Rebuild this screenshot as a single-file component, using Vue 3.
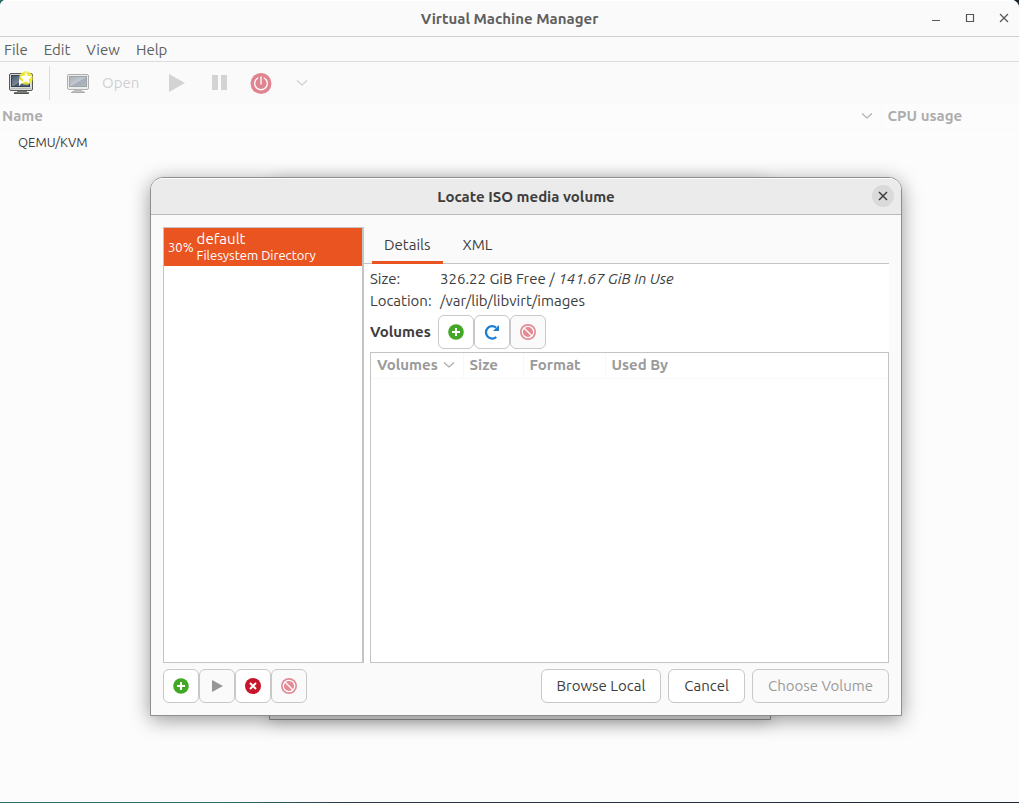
<script setup>
import { ref } from 'vue'

const menus = ['File', 'Edit', 'View', 'Help']
const tabs = ['Details', 'XML']
const activeTab = ref('Details')
</script>

<template>
  <div class="desktop">
    <main class="window">
      <header class="titlebar">
        <h1>Virtual Machine Manager</h1>
        <div class="controls">
          <button type="button" aria-label="Minimize">
            <svg width="10" height="10" viewBox="0 0 10 10"><path d="M1 7.5h8" /></svg>
          </button>
          <button type="button" aria-label="Maximize">
            <svg width="10" height="10" viewBox="0 0 10 10"><path d="M1.5 1.5h7v7h-7z" /></svg>
          </button>
          <button type="button" aria-label="Close">
            <svg width="10" height="10" viewBox="0 0 10 10"><path d="M1 1l8 8M9 1l-8 8" /></svg>
          </button>
        </div>
      </header>

      <nav class="menubar">
        <button v-for="m in menus" :key="m" type="button">{{ m }}</button>
      </nav>

      <div class="toolbar">
        <button type="button" class="new-vm" aria-label="Create a new virtual machine">
          <svg width="26" height="24" viewBox="0 0 26 24">
            <defs>
              <linearGradient id="screenDark" x1="0" y1="0" x2="1" y2="1">
                <stop offset="0" stop-color="#45546a" />
                <stop offset="0.5" stop-color="#7a8797" />
                <stop offset="0.55" stop-color="#47566c" />
                <stop offset="1" stop-color="#5b6b82" />
              </linearGradient>
              <radialGradient id="glow">
                <stop offset="0.5" stop-color="#f3ee2a" />
                <stop offset="0.8" stop-color="#f1ec35" stop-opacity="0.85" />
                <stop offset="1" stop-color="#f1ec35" stop-opacity="0" />
              </radialGradient>
            </defs>
            <path d="M9 20h10v1h2v2H6v-2h3z" fill="#777974" />
            <path d="M6 22.5h14" stroke="#50534e" />
            <rect x="1.5" y="2.5" width="23" height="17" rx="1.5" fill="#d9dad7" stroke="#555753" />
            <rect x="3.5" y="4.5" width="18" height="11" fill="url(#screenDark)" stroke="#38414e" />
            <path d="M3 17.5h20" stroke="#b8bab6" />
            <circle cx="18" cy="7" r="7.5" fill="url(#glow)" />
            <path d="M18 1l1.600 3.900 4.400.4-3.300 2.900 1 4.300L18 10.200l-3.900 2.300 1.100-4.300-3.200-2.900 4.400-.4z" fill="#fff" />
            <path d="M11 8l4 3-4 4z" fill="#fff" />
          </svg>
        </button>
        <span class="divider"></span>
        <button type="button" class="open" disabled>
          <svg width="24" height="22" viewBox="0 0 24 22">
            <defs>
              <linearGradient id="screenPale" x1="0" y1="0" x2="1" y2="1">
                <stop offset="0" stop-color="#a9b0b9" />
                <stop offset="0.5" stop-color="#c2c8cf" />
                <stop offset="0.55" stop-color="#a5adb8" />
                <stop offset="1" stop-color="#b0b7c1" />
              </linearGradient>
            </defs>
            <path d="M8 17h8v2h2v2H6v-2h2z" fill="#bfc0be" />
            <path d="M5 20.5h14" stroke="#adafab" />
            <rect x="1.5" y="2.5" width="21" height="15" rx="1.5" fill="#ececeb" stroke="#afb0ae" />
            <rect x="3.5" y="4.5" width="17" height="10" fill="url(#screenPale)" stroke="#9fa5ad" />
          </svg>
          <span>Open</span>
        </button>
        <button type="button" class="play" aria-label="Run" disabled>
          <svg width="18" height="20" viewBox="0 0 18 20"><path d="M1 1l16 9-16 9z" fill="#d3d3d3" /></svg>
        </button>
        <button type="button" class="pause" aria-label="Pause" disabled>
          <svg width="18" height="18" viewBox="0 0 18 18"><path d="M1 1h6v15H1zM10 1h6v15h-6z" fill="#d3d3d3" /></svg>
        </button>
        <button type="button" class="power" aria-label="Shut down" disabled>
          <svg width="22" height="22" viewBox="0 0 22 22">
            <circle cx="11" cy="11.5" r="10.5" fill="#e0848f" />
            <path d="M7.800 6a6.300 6.300 0 1 0 6.400 0M11 5V12" fill="none" stroke="#fff" stroke-width="1.300" stroke-linecap="round" />
          </svg>
        </button>
        <button type="button" class="more" aria-label="Shut down options" disabled>
          <svg width="12" height="8" viewBox="0 0 12 8"><path d="M1 1.500l5 4.500 5-4.500" fill="none" stroke="#d0d0d0" stroke-width="1.200" /></svg>
        </button>
      </div>

      <table class="machines">
        <thead>
          <tr>
            <th>
              <div class="head">
                Name
                <svg width="12" height="8" viewBox="0 0 12 8"><path d="M1 1.500l5 4.500 5-4.500" fill="none" stroke="#b0b0b0" stroke-width="1.200" /></svg>
              </div>
            </th>
            <th class="cpu">CPU usage</th>
          </tr>
        </thead>
        <tbody>
          <tr><td>QEMU/KVM</td><td></td></tr>
        </tbody>
      </table>
    </main>

    <div class="wizard"></div>

    <section class="dialog" role="dialog" aria-labelledby="dialog-title">
      <header class="dialog-head">
        <h2 id="dialog-title">Locate ISO media volume</h2>
        <button type="button" aria-label="Close dialog">
          <svg width="10" height="10" viewBox="0 0 10 10"><path d="M1 1l8 8M9 1l-8 8" /></svg>
        </button>
      </header>

      <div class="dialog-body">
        <div class="panes">
          <ul class="pools">
            <li class="pool">
              <span class="percent">30%</span>
              <span class="pool-text"><span>default</span><span class="pool-type">Filesystem Directory</span></span>
            </li>
          </ul>

          <div class="notebook">
            <div class="tabs" role="tablist">
              <button
                v-for="t in tabs"
                :key="t"
                type="button"
                role="tab"
                :aria-selected="activeTab === t"
                :class="{ active: activeTab === t }"
                @click="activeTab = t"
              >{{ t }}</button>
            </div>
            <div class="page">
              <dl class="facts">
                <dt>Size:</dt>
                <dd>326.22 GiB Free / <i>141.67 GiB In Use</i></dd>
                <dt>Location:</dt>
                <dd>/var/lib/libvirt/images</dd>
              </dl>
              <div class="volume-bar">
                <b>Volumes</b>
                <div class="icon-group">
                  <button type="button" aria-label="Create new volume">
                    <svg width="16" height="16" viewBox="0 0 16 16"><circle cx="8" cy="8" r="7.800" fill="#43a726" /><path d="M8 4v8M4 8h8" stroke="#fff" stroke-width="2" /></svg>
                  </button>
                  <button type="button" aria-label="Refresh volume list">
                    <svg width="16" height="16" viewBox="0 0 16 16"><path d="M12 3.500A6.200 6.200 0 1 0 12.300 13" fill="none" stroke="#1c7ed2" stroke-width="2.300" /><path d="M15 1v6H9z" fill="#1c7ed2" /></svg>
                  </button>
                  <button type="button" aria-label="Delete volume" disabled>
                    <svg width="16" height="16" viewBox="0 0 16 16"><circle cx="8" cy="8" r="8" fill="#e38a95" /><circle cx="8" cy="8" r="5.700" fill="none" stroke="#fff" stroke-width="1.200" /><path d="M4 4l8 8" stroke="#fff" stroke-width="1.300" /></svg>
                  </button>
                </div>
              </div>
              <div class="volume-list">
                <table>
                  <thead>
                    <tr>
                      <th class="c-volumes">
                        <div class="head">
                          Volumes
                          <svg width="12" height="8" viewBox="0 0 12 8"><path d="M1 1.500l5 4.500 5-4.500" fill="none" stroke="#aaa" stroke-width="1.200" /></svg>
                        </div>
                      </th>
                      <th class="c-size">Size</th>
                      <th class="c-format">Format</th>
                      <th>Used By</th>
                    </tr>
                  </thead>
                </table>
              </div>
            </div>
          </div>
        </div>

        <footer class="actions">
          <div class="icon-group">
            <button type="button" aria-label="Add pool">
              <svg width="16" height="16" viewBox="0 0 16 16"><circle cx="8" cy="8" r="7.800" fill="#43a726" /><path d="M8 4v8M4 8h8" stroke="#fff" stroke-width="2" /></svg>
            </button>
            <button type="button" aria-label="Start pool" disabled>
              <svg width="16" height="16" viewBox="0 0 16 16"><path d="M3 2l11 6-11 6z" fill="#979797" /></svg>
            </button>
            <button type="button" aria-label="Stop pool">
              <svg width="16" height="16" viewBox="0 0 16 16"><circle cx="8" cy="8" r="8" fill="#c7162b" /><path d="M5 5l6 6M11 5l-6 6" stroke="#fff" stroke-width="2" /></svg>
            </button>
            <button type="button" aria-label="Delete pool" disabled>
              <svg width="16" height="16" viewBox="0 0 16 16"><circle cx="8" cy="8" r="8" fill="#e38a95" /><circle cx="8" cy="8" r="5.700" fill="none" stroke="#fff" stroke-width="1.200" /><path d="M4 4l8 8" stroke="#fff" stroke-width="1.300" /></svg>
            </button>
          </div>
          <div class="choices">
            <button type="button">Browse Local</button>
            <button type="button">Cancel</button>
            <button type="button" disabled>Choose Volume</button>
          </div>
        </footer>
      </div>
    </section>
  </div>
</template>

<style>
body {
  margin: 0;
}
</style>

<style scoped>
* {
  box-sizing: border-box;
}
.desktop {
  position: relative;
  display: flex;
  min-height: 100vh;
  padding-bottom: 1px;
  background: linear-gradient(90deg, #2f6d66 0, #2f6d66 22%, #2c3a48 34%, #1c2733 100%);
  font: 15px/20px Ubuntu, "Open Sans", "Noto Sans", sans-serif;
  color: #3d3d3d;
}
button {
  font: inherit;
  color: inherit;
  padding: 0;
  border: 0;
  background: none;
}
svg {
  display: block;
  flex: none;
}
h1,
h2 {
  margin: 0;
  font-size: 15px;
  font-weight: 700;
}
.window {
  flex: 1;
  background: #fcfcfc;
  border-radius: 6px 8px 0 0;
  overflow: hidden;
}
.titlebar {
  position: relative;
  display: flex;
  align-items: center;
  justify-content: center;
  height: 37px;
  background: #fafafa;
  border-top: 1px solid #fff;
  border-bottom: 1px solid #cfcfcf;
  color: #5f5f5f;
}
.controls {
  position: absolute;
  right: 10px;
  top: 12px;
  display: flex;
  gap: 24px;
}
.controls path,
.dialog-head path {
  fill: none;
  stroke: #555;
  stroke-width: 1.2;
}
.menubar {
  display: flex;
  gap: 16px;
  height: 25px;
  padding: 1px 4px 0;
  background: #fafafa;
  border-bottom: 1px solid #dcdcdc;
  color: #5f5f5f;
}
.toolbar {
  display: flex;
  align-items: center;
  height: 42px;
  padding-left: 8px;
  background: #fafafa;
}
.divider {
  width: 1px;
  height: 34px;
  margin: 0 16px 0 15px;
  background: #dcdcdc;
}
.open {
  display: flex;
  align-items: center;
  gap: 12px;
  color: #d0d0d0;
}
.play {
  margin-left: 29px;
}
.pause {
  margin-left: 25px;
}
.power {
  margin-left: 21px;
}
.more {
  margin-left: 24px;
}
table {
  width: 100%;
  border-collapse: collapse;
}
th {
  text-align: left;
  font-weight: 700;
}
.head {
  display: flex;
  align-items: center;
  justify-content: space-between;
}
.machines th {
  height: 25px;
  padding: 0 8px 0 2px;
  border-bottom: 1px solid #f9f9f9;
  color: #adadad;
}
.machines .cpu {
  width: 138px;
  padding-left: 6px;
  border-left: 1px solid #f9f9f9;
}
.machines td {
  height: 25px;
  padding: 0 18px;
  font-size: 13px;
}
.wizard {
  position: absolute;
  top: 177px;
  bottom: 83px;
  left: 269px;
  right: 248px;
  background: #e4e4e4;
  border: 1px solid #8f8f8f;
  border-radius: 12px 12px 0 0;
  box-shadow: 0 3px 16px rgba(0, 0, 0, 0.2);
}
.dialog {
  position: absolute;
  top: 177px;
  bottom: 87px;
  left: 150px;
  right: 117px;
  display: flex;
  flex-direction: column;
  background: #fafafa;
  border: 1px solid #8e8e8e;
  border-radius: 13px 13px 0 0;
  box-shadow: 0 4px 20px rgba(0, 0, 0, 0.4);
}
.dialog-head {
  position: relative;
  display: flex;
  align-items: center;
  justify-content: center;
  height: 37px;
  background: #ebebeb;
  border-top: 1px solid #fff;
  border-bottom: 1px solid #b9b9b9;
  border-radius: 12px 12px 0 0;
}
.dialog-head button {
  position: absolute;
  right: 7px;
  top: 6px;
  display: grid;
  place-items: center;
  width: 22px;
  height: 22px;
  border-radius: 50%;
  background: #dadada;
}
.dialog-head path {
  stroke: #3d3d3d;
  stroke-width: 1.5;
}
.dialog-body {
  flex: 1;
  display: flex;
  flex-direction: column;
  gap: 6px;
  padding: 12px;
}
.panes {
  flex: 1;
  display: flex;
}
.pools {
  width: 201px;
  margin: 0;
  padding: 0;
  list-style: none;
  background: #fff;
  border: 1px solid #c4c4c4;
  border-right-width: 2px;
}
.pool {
  display: flex;
  align-items: center;
  gap: 3px;
  height: 38px;
  padding-left: 4px;
  background: #e95420;
  color: #fff;
}
.percent,
.pool-type {
  font-size: 13px;
}
.pool-text {
  display: flex;
  flex-direction: column;
  line-height: 16px;
}
.notebook {
  flex: 1;
  display: flex;
  flex-direction: column;
  background: #fff;
}
.tabs {
  display: flex;
  gap: 8px;
  height: 37px;
  padding-left: 8px;
  background: #fafafa;
  border-bottom: 1px solid #c4c4c4;
}
.tabs button {
  height: 37px;
  padding: 2px 12px 0;
  border-bottom: 3px solid transparent;
}
.tabs .active {
  border-color: #e95420;
}
.page {
  flex: 1;
  display: flex;
  flex-direction: column;
  padding: 4px 0 0 6px;
}
.facts {
  display: grid;
  grid-template-columns: 70px 1fr;
  margin: 0;
  line-height: 22px;
}
.facts dd {
  margin: 0;
}
.volume-bar {
  display: flex;
  align-items: center;
  gap: 6px;
  margin: 3px 0;
}
.volume-bar b {
  min-width: 62px;
}
.icon-group {
  display: flex;
}
.icon-group button {
  display: grid;
  place-items: center;
  width: 36px;
  height: 34px;
}
.icon-group button,
.choices button {
  background: #fff;
  border: 1px solid #c8c8c8;
  border-radius: 6px;
}
.icon-group button:disabled,
.choices button:disabled {
  background: #fafafa;
  color: #9a9a9a;
}
.volume-list {
  flex: 1;
  border: 1px solid #c4c4c4;
}
.volume-list th {
  height: 25px;
  padding: 0 6px;
  border-bottom: 1px solid #f8f8f8;
  border-left: 1px solid #f8f8f8;
  color: #9a9a9a;
}
.volume-list .c-volumes {
  width: 92px;
  padding-right: 8px;
  border-left: 0;
}
.c-size {
  width: 60px;
}
.c-format {
  width: 82px;
}
.actions {
  display: flex;
  justify-content: space-between;
}
.choices {
  display: flex;
  gap: 7px;
}
.choices button {
  height: 34px;
  padding: 0 15px;
}
</style>
